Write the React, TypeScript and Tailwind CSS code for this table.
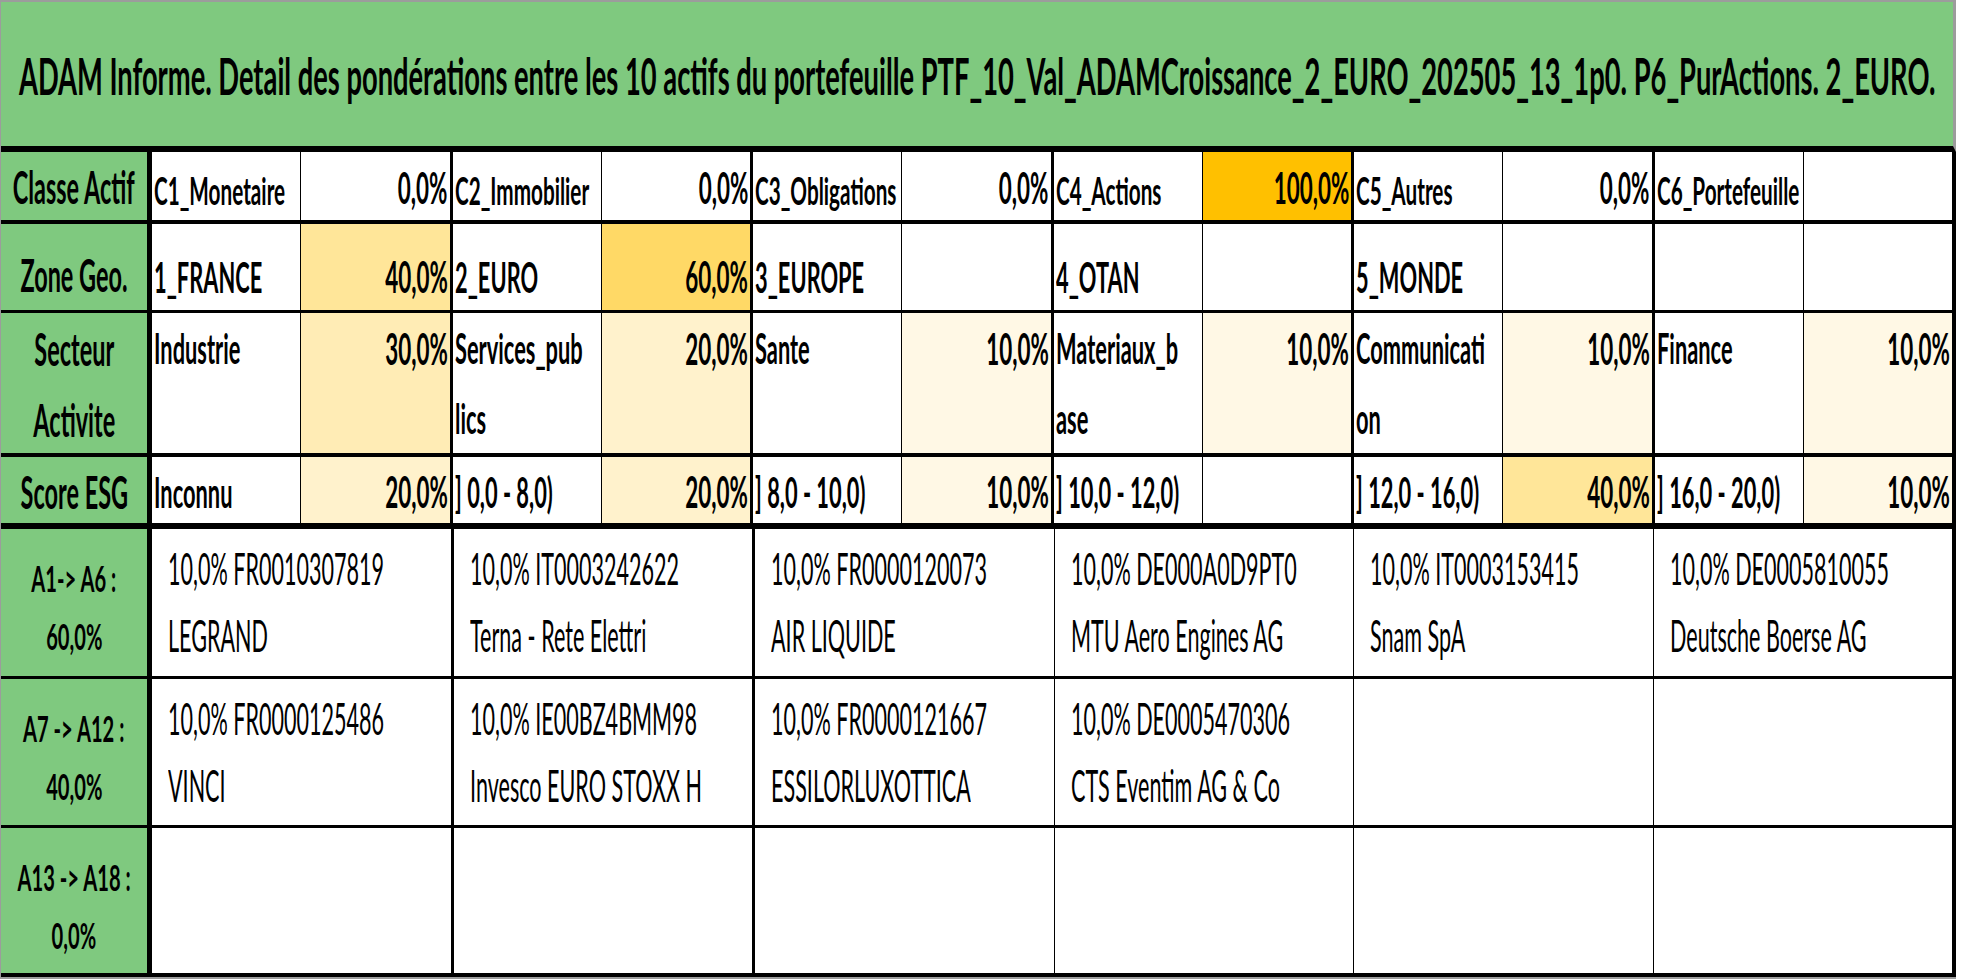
import React from 'react';

type Pair = { name: string[]; value: string; bg: string };

const txTitle = 'text-[52px] font-bold leading-none origin-center scale-x-[0.525]';
const txLabel = 'text-[46px] font-bold leading-none origin-center scale-x-[0.51]';
const txLabel2 = 'text-[46px] font-bold leading-[71px] origin-center scale-x-[0.51]';
const txName1 = 'text-[38px] font-bold leading-none origin-left scale-x-[0.545]';
const txName = 'text-[42px] font-bold leading-none origin-left scale-x-[0.52]';
const txName2 = 'text-[42px] font-bold leading-[70px] origin-left scale-x-[0.52]';
const txValue = 'text-[44px] font-bold leading-none origin-right scale-x-[0.51]';
const txValue2 = 'text-[44px] font-bold leading-[70px] origin-right scale-x-[0.51]';
const txAsset = 'text-[44px] font-normal leading-[67px] origin-left scale-x-[0.49]';
const txGroup = 'text-[36px] font-bold leading-[58px] origin-center scale-x-[0.56]';

function T({ c, children }: { c: string; children: React.ReactNode }) {
  return <span className={`inline-block whitespace-nowrap ${c}`}>{children}</span>;
}

const classe: Pair[] = [
  { name: ['C1_Monetaire'], value: '0,0%', bg: '' },
  { name: ['C2_Immobilier'], value: '0,0%', bg: '' },
  { name: ['C3_Obligations'], value: '0,0%', bg: '' },
  { name: ['C4_Actions'], value: '100,0%', bg: 'bg-[#ffc000]' },
  { name: ['C5_Autres'], value: '0,0%', bg: '' },
  { name: ['C6_Portefeuille'], value: '', bg: '' },
];

const zone: Pair[] = [
  { name: ['1_FRANCE'], value: '40,0%', bg: 'bg-[#ffe699]' },
  { name: ['2_EURO'], value: '60,0%', bg: 'bg-[#ffd966]' },
  { name: ['3_EUROPE'], value: '', bg: '' },
  { name: ['4_OTAN'], value: '', bg: '' },
  { name: ['5_MONDE'], value: '', bg: '' },
  { name: [], value: '', bg: '' },
];

const secteur: Pair[] = [
  { name: ['Industrie'], value: '30,0%', bg: 'bg-[#ffecb5]' },
  { name: ['Services_pub', 'lics'], value: '20,0%', bg: 'bg-[#fff2cc]' },
  { name: ['Sante'], value: '10,0%', bg: 'bg-[#fff8e5]' },
  { name: ['Materiaux_b', 'ase'], value: '10,0%', bg: 'bg-[#fff8e5]' },
  { name: ['Communicati', 'on'], value: '10,0%', bg: 'bg-[#fff8e5]' },
  { name: ['Finance'], value: '10,0%', bg: 'bg-[#fff8e5]' },
];

const esg: Pair[] = [
  { name: ['Inconnu'], value: '20,0%', bg: 'bg-[#fff2cc]' },
  { name: ['] 0,0 - 8,0)'], value: '20,0%', bg: 'bg-[#fff2cc]' },
  { name: ['] 8,0 - 10,0)'], value: '10,0%', bg: 'bg-[#fff8e5]' },
  { name: ['] 10,0 - 12,0)'], value: '', bg: '' },
  { name: ['] 12,0 - 16,0)'], value: '40,0%', bg: 'bg-[#ffe699]' },
  { name: ['] 16,0 - 20,0)'], value: '10,0%', bg: 'bg-[#fff8e5]' },
];

const groups: { label: string; weight: string; assets: string[][] }[] = [
  {
    label: 'A1-> A6 :',
    weight: '60,0%',
    assets: [
      ['10,0% FR0010307819', 'LEGRAND'],
      ['10,0% IT0003242622', 'Terna - Rete Elettri'],
      ['10,0% FR0000120073', 'AIR LIQUIDE'],
      ['10,0% DE000A0D9PT0', 'MTU Aero Engines AG'],
      ['10,0% IT0003153415', 'Snam SpA'],
      ['10,0% DE0005810055', 'Deutsche Boerse AG'],
    ],
  },
  {
    label: 'A7 -> A12 :',
    weight: '40,0%',
    assets: [
      ['10,0% FR0000125486', 'VINCI'],
      ['10,0% IE00BZ4BMM98', 'Invesco EURO STOXX H'],
      ['10,0% FR0000121667', 'ESSILORLUXOTTICA'],
      ['10,0% DE0005470306', 'CTS Eventim AG & Co'],
      [],
      [],
    ],
  },
  { label: 'A13 -> A18 :', weight: '0,0%', assets: [[], [], [], [], [], []] },
];

function Pairs({ pairs, nameTx, valueTx, cellCls }: { pairs: Pair[]; nameTx: string; valueTx: string; cellCls: string }) {
  return (
    <>
      {pairs.map((p, i) => (
        <div key={i} className={`flex min-w-0 flex-1 ${i < 5 ? 'border-r-[3px] border-black' : ''}`}>
          <div className={`flex min-w-0 flex-1 flex-col items-start overflow-hidden border-r border-black pl-[2px] ${cellCls}`}>
            {p.name.map((l, j) => (
              <T key={j} c={nameTx}>
                {l}
              </T>
            ))}
          </div>
          <div className={`flex min-w-0 flex-1 flex-col items-end overflow-hidden pr-[2px] ${cellCls} ${p.bg}`}>
            {p.value && <T c={valueTx}>{p.value}</T>}
          </div>
        </div>
      ))}
    </>
  );
}

export default function App() {
  return (
    <div className="h-[979px] w-[1961px] overflow-hidden bg-white font-['Lato','Carlito',sans-serif] text-black">
      <div className="w-[1956px] border-t-2 border-b-2 border-l border-[#9c9c9c]">
        {/* title */}
        <div className="flex h-[150px] items-center justify-center overflow-hidden border-r-[3px] border-b-[6px] border-r-[#9c9c9c] border-b-black bg-[#7fc97f] pt-[2px]">
          <T c={txTitle}>
            ADAM Informe. Detail des pondérations entre les 10 actifs du portefeuille PTF_10_Val_ADAMCroissance_2_EURO_202505_13_1p0. P6_PurActions. 2_EURO.
          </T>
        </div>

        {/* Classe Actif */}
        <div className="flex h-[72px] border-r-4 border-b-4 border-black">
          <div className="flex w-[151px] shrink-0 flex-col items-center justify-end border-r-[5px] border-black bg-[#7fc97f] pb-[10px]">
            <T c={txLabel}>Classe Actif</T>
          </div>
          <Pairs pairs={classe} nameTx={txName1} valueTx={txValue} cellCls="justify-end pb-[11px]" />
        </div>

        {/* Zone Geo */}
        <div className="flex h-[89px] border-r-4 border-b-[3px] border-black">
          <div className="flex w-[151px] shrink-0 flex-col items-center justify-end border-r-[5px] border-black bg-[#7fc97f] pb-[12px]">
            <T c={txLabel}>Zone Geo.</T>
          </div>
          <Pairs pairs={zone} nameTx={txName} valueTx={txValue} cellCls="justify-end pb-[12px]" />
        </div>

        {/* Secteur Activite */}
        <div className="flex h-[144px] border-r-4 border-b-4 border-black">
          <div className="flex w-[151px] shrink-0 flex-col items-center justify-start border-r-[5px] border-black bg-[#7fc97f]">
            <T c={txLabel2}>Secteur</T>
            <T c={txLabel2}>Activite</T>
          </div>
          <Pairs pairs={secteur} nameTx={txName2} valueTx={txValue2} cellCls="justify-start" />
        </div>

        {/* Score ESG */}
        <div className="flex h-[72px] border-r-4 border-b-[6px] border-black">
          <div className="flex w-[151px] shrink-0 flex-col items-center justify-end border-r-[5px] border-black bg-[#7fc97f] pb-[8px]">
            <T c={txLabel}>Score ESG</T>
          </div>
          <Pairs pairs={esg} nameTx={txName} valueTx={txValue} cellCls="justify-end pb-[10px]" />
        </div>

        {/* assets */}
        {groups.map((g, gi) => (
          <div
            key={gi}
            className={`flex border-r-4 border-black ${gi === 0 ? 'h-[150px] border-b-[3px]' : gi === 1 ? 'h-[149px] border-b-[3px]' : 'h-[149px] border-b-4'}`}
          >
            <div className="flex w-[151px] shrink-0 flex-col items-center border-r-[5px] border-black bg-[#7fc97f] pt-[20px]">
              <T c={txGroup}>{g.label}</T>
              <T c={txGroup}>{g.weight}</T>
            </div>
            {g.assets.map((a, ai) => (
              <div
                key={ai}
                className={`flex min-w-0 flex-1 flex-col items-start overflow-hidden pl-[16px] pt-[6px] ${ai < 2 ? 'border-r-[3px] border-black' : ai < 5 ? 'border-r border-black' : ''}`}
              >
                {a.map((l, li) => (
                  <T key={li} c={txAsset}>
                    {l}
                  </T>
                ))}
              </div>
            ))}
          </div>
        ))}
      </div>
    </div>
  );
}
